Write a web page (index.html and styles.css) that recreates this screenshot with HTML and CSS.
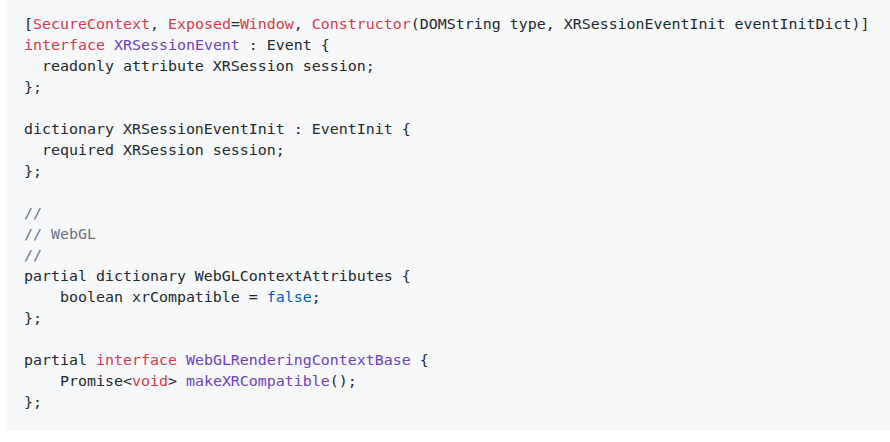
FILE: index.html
```html
<!DOCTYPE html>
<html>
<head>
<meta charset="utf-8">
<link rel="stylesheet" href="styles.css">
</head>
<body>
<div class="page">
<pre class="code"><code>[<span class="k">SecureContext</span>, <span class="k">Exposed</span>=<span class="k">Window</span>, <span class="k">Constructor</span>(DOMString type, XRSessionEventInit eventInitDict)]
<span class="k">interface</span> <span class="t">XRSessionEvent</span> : Event {
  readonly attribute XRSession session;
};

dictionary XRSessionEventInit : EventInit {
  required XRSession session;
};

<span class="c">//</span>
<span class="c">// WebGL</span>
<span class="c">//</span>
partial dictionary WebGLContextAttributes {
    boolean xrCompatible = <span class="b">false</span>;
};

partial <span class="k">interface</span> <span class="t">WebGLRenderingContextBase</span> {
    Promise&lt;<span class="k">void</span>&gt; <span class="t">makeXRCompatible</span>();
};</code></pre>
</div>
</body>
</html>
```

FILE: styles.css
```css
html, body {
  margin: 0;
  padding: 0;
  background: #ffffff;
  overflow: hidden;
}

.page {
  padding-left: 6px;
}

.code {
  margin: 0;
  padding: 13.5px 10px 18px 18px;
  background: #f6f8fa;
  border-radius: 0 0 0 3px;
  font-family: "DejaVu Sans Mono", "Liberation Mono", monospace;
  font-size: 14.95px;
  line-height: 21px;
  color: #24292e;
  white-space: pre;
  overflow: hidden;
}

.code code {
  font-family: inherit;
  font-size: inherit;
}

.k { color: #d73a49; }
.t { color: #6f42c1; }
.b { color: #005cc5; }
.c { color: #6a737d; }
```
